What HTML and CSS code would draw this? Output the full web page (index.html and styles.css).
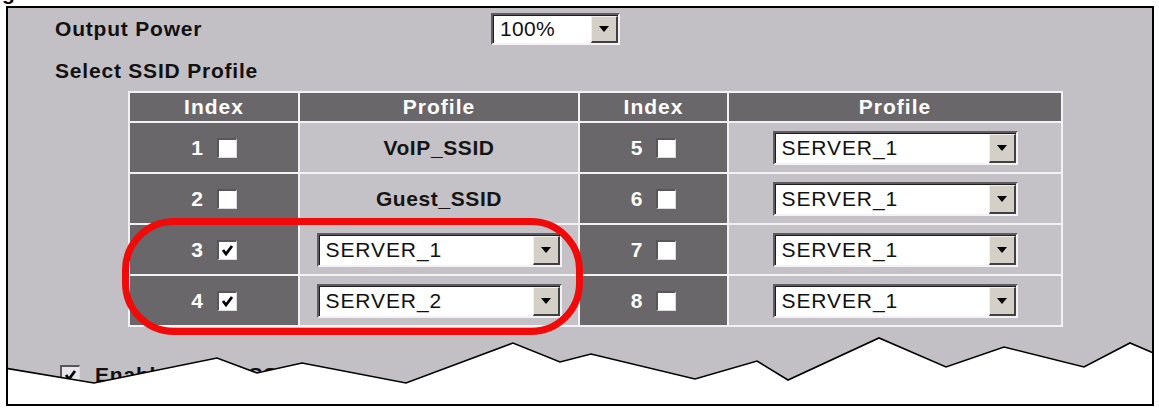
FILE: index.html
```html
<!DOCTYPE html>
<html>
<head>
<meta charset="utf-8">
<link rel="stylesheet" href="styles.css">
</head>
<body>
<div class="caption"><span>g</span></div>
<div class="frame">
  <div class="power-row">
    <span class="label">Output Power</span>
    <div class="select select-power"><span class="val">100%</span><span class="btn"><svg width="10" height="6" viewBox="0 0 10 6"><polygon points="0,0 10,0 5,6" fill="#000"/></svg></span></div>
  </div>
  <div class="heading">Select SSID Profile</div>
  <table class="ssid">
    <colgroup><col class="c1"><col class="c2"><col class="c3"><col class="c4"></colgroup>
    <thead>
      <tr><th>Index</th><th>Profile</th><th>Index</th><th>Profile</th></tr>
    </thead>
    <tbody>
      <tr>
        <td class="idx"><span class="idx-in"><span class="num">1</span><span class="cb"></span></span></td>
        <td class="prof"><span class="ptext">VoIP_SSID</span></td>
        <td class="idx"><span class="idx-in"><span class="num">5</span><span class="cb"></span></span></td>
        <td class="prof"><div class="select select-prof"><span class="val">SERVER_1</span><span class="btn"><svg width="10" height="6" viewBox="0 0 10 6"><polygon points="0,0 10,0 5,6" fill="#000"/></svg></span></div></td>
      </tr>
      <tr>
        <td class="idx"><span class="idx-in"><span class="num">2</span><span class="cb"></span></span></td>
        <td class="prof"><span class="ptext">Guest_SSID</span></td>
        <td class="idx"><span class="idx-in"><span class="num">6</span><span class="cb"></span></span></td>
        <td class="prof"><div class="select select-prof"><span class="val">SERVER_1</span><span class="btn"><svg width="10" height="6" viewBox="0 0 10 6"><polygon points="0,0 10,0 5,6" fill="#000"/></svg></span></div></td>
      </tr>
      <tr>
        <td class="idx"><span class="idx-in"><span class="num">3</span><span class="cb"><svg width="15" height="15" viewBox="0 0 15 15"><polyline points="3,7 6,11 12,3" fill="none" stroke="#000" stroke-width="2.8"/></svg></span></span></td>
        <td class="prof"><div class="select select-prof"><span class="val">SERVER_1</span><span class="btn"><svg width="10" height="6" viewBox="0 0 10 6"><polygon points="0,0 10,0 5,6" fill="#000"/></svg></span></div></td>
        <td class="idx"><span class="idx-in"><span class="num">7</span><span class="cb"></span></span></td>
        <td class="prof"><div class="select select-prof"><span class="val">SERVER_1</span><span class="btn"><svg width="10" height="6" viewBox="0 0 10 6"><polygon points="0,0 10,0 5,6" fill="#000"/></svg></span></div></td>
      </tr>
      <tr>
        <td class="idx"><span class="idx-in"><span class="num">4</span><span class="cb"><svg width="15" height="15" viewBox="0 0 15 15"><polyline points="3,7 6,11 12,3" fill="none" stroke="#000" stroke-width="2.8"/></svg></span></span></td>
        <td class="prof"><div class="select select-prof"><span class="val">SERVER_2</span><span class="btn"><svg width="10" height="6" viewBox="0 0 10 6"><polygon points="0,0 10,0 5,6" fill="#000"/></svg></span></div></td>
        <td class="idx"><span class="idx-in"><span class="num">8</span><span class="cb"></span></span></td>
        <td class="prof"><div class="select select-prof"><span class="val">SERVER_1</span><span class="btn"><svg width="10" height="6" viewBox="0 0 10 6"><polygon points="0,0 10,0 5,6" fill="#000"/></svg></span></div></td>
      </tr>
    </tbody>
  </table>
  <div class="enable-row">
    <span class="cb cb-light"><svg width="15" height="15" viewBox="0 0 15 15"><polyline points="3,7 6,11 12,3" fill="none" stroke="#000" stroke-width="2.8"/></svg></span>
    <span class="enable-text">Enable Intra-BSS</span>
  </div>
  <div class="highlight"></div>
  <svg class="torn" width="1144" height="396" viewBox="0 0 1144 396">
    <polygon points="-4,360 86,375 209,350 249,365 294,355 398,375 505,335 552,354 583,346 687,371 749,353 780,372 871,330 938,359 996,339 1076,359 1122,335 1150,347 1150,400 -4,400" fill="#ffffff" stroke="#000" stroke-width="1.6" stroke-linejoin="miter"/>
  </svg>
</div>
</body>
</html>
```

FILE: styles.css
```css
html, body {
  margin: 0;
  padding: 0;
  background: #ffffff;
}

body {
  font-family: "Liberation Sans", Arial, sans-serif;
  width: 1159px;
  height: 409px;
  overflow: hidden;
}

.caption {
  height: 6px;
  overflow: hidden;
  font-weight: bold;
  font-size: 21px;
  line-height: 21px;
  color: #000;
}

.caption span {
  display: block;
  margin-top: -18px;
  margin-left: 2px;
}

.frame {
  position: relative;
  box-sizing: border-box;
  width: 1148px;
  height: 400px;
  margin-left: 6px;
  border: 2px solid #000;
  background: #c3c0c5;
  overflow: hidden;
}

.power-row {
  display: flex;
  align-items: center;
  margin-top: 5px;
  padding-left: 47px;
}

.label,
.heading {
  font-weight: bold;
  font-size: 21px;
  letter-spacing: 0.8px;
  color: #111;
}

.label {
  width: 436px;
}

.heading {
  margin-top: 14px;
  margin-left: 47px;
  line-height: 24px;
}

/* select boxes */
.select {
  display: inline-flex;
  align-items: stretch;
  box-sizing: border-box;
  background: #ffffff;
  border-style: solid;
  border-width: 2px;
  border-color: #5e5c60 #f4f2f4 #f4f2f4 #5e5c60;
  box-shadow: inset 1px 1px 0 #1e1e1e;
  text-align: left;
  vertical-align: middle;
}

.select-power {
  width: 129px;
  height: 32px;
}

.select-prof {
  width: 245px;
  height: 34px;
}

.select .val {
  flex: 1;
  display: flex;
  align-items: center;
  padding-left: 7px;
  font-size: 21px;
  letter-spacing: 0.9px;
  color: #111;
}

.select-power .val {
  letter-spacing: 0.3px;
}

.select .btn {
  width: 27px;
  display: flex;
  align-items: center;
  justify-content: center;
  box-sizing: border-box;
  background: #d4d0c8;
  border-style: solid;
  border-width: 1px 2px 2px 1px;
  border-color: #f2f0ec #404040 #404040 #f2f0ec;
  margin: 1px 0 0 0;
}

/* table */
.ssid {
  margin-top: 8px;
  margin-left: 120px;
  width: 935px;
  table-layout: fixed;
  border-collapse: separate;
  border-spacing: 2px;
  background: #f3f1f4;
}

.c1 { width: 168px; }
.c2 { width: 278px; }
.c3 { width: 147px; }
.c4 { width: 332px; }

.ssid th {
  height: 28px;
  padding: 0;
  background: #6a676b;
  color: #ffffff;
  font-weight: bold;
  font-size: 21px;
  letter-spacing: 1px;
  text-align: center;
  vertical-align: middle;
}

.ssid td {
  height: 49px;
  padding: 0;
  text-align: center;
  vertical-align: middle;
}

.ssid td.idx {
  background: #6a676b;
}

.ssid td.prof {
  background: #c5c2c7;
}

.idx-in {
  display: inline-flex;
  align-items: center;
  gap: 14px;
}

.num {
  color: #ffffff;
  font-weight: bold;
  font-size: 21px;
}

.ptext {
  font-weight: bold;
  font-size: 21px;
  letter-spacing: 0.6px;
  color: #151515;
}

/* checkbox */
.cb {
  display: inline-flex;
  align-items: center;
  justify-content: center;
  box-sizing: border-box;
  width: 20px;
  height: 20px;
  background: #ffffff;
  border-style: solid;
  border-width: 2px 1px 1px 2px;
  border-color: #58565a #dcdadc #dcdadc #58565a;
}

.cb-light {
  background: #e8e6e8;
}

/* enable row */
.enable-row {
  display: flex;
  align-items: center;
  gap: 15px;
  margin-top: 36px;
  margin-left: 52px;
}

.enable-text {
  font-weight: bold;
  font-size: 21px;
  letter-spacing: 0.8px;
  color: #111;
}

/* overlays */
.highlight {
  position: absolute;
  left: 114px;
  top: 210px;
  width: 461px;
  height: 117px;
  box-sizing: border-box;
  border: 7px solid #f00a0a;
  border-radius: 52px;
}

.torn {
  position: absolute;
  left: 0;
  top: 0;
}
```
